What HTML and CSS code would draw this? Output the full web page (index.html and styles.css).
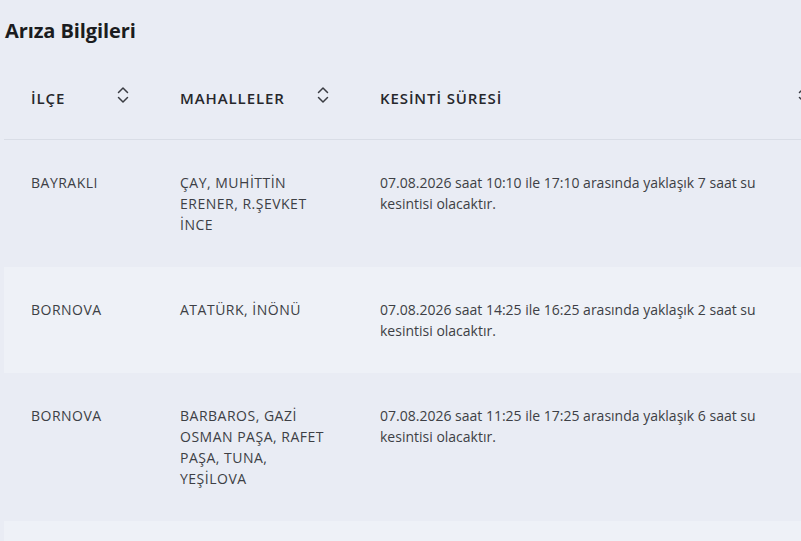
FILE: index.html
```html
<!DOCTYPE html>
<html lang="tr">
<head>
<meta charset="utf-8">
<link rel="stylesheet" href="styles.css">
</head>
<body>
<div class="page">
  <h2 class="title">Arıza Bilgileri</h2>
  <table class="grid">
    <colgroup>
      <col class="c1"><col class="c2"><col class="c3">
    </colgroup>
    <thead>
      <tr>
        <th><div class="th-in"><span>İLÇE</span><svg class="sort" viewBox="0 0 12 18" width="12" height="18"><path d="M1.5 6.5 L6 2 L10.5 6.5 M1.5 11.5 L6 16 L10.5 11.5"/></svg></div></th>
        <th><div class="th-in"><span>MAHALLELER</span><svg class="sort" viewBox="0 0 12 18" width="12" height="18"><path d="M1.5 6.5 L6 2 L10.5 6.5 M1.5 11.5 L6 16 L10.5 11.5"/></svg></div></th>
        <th><div class="th-in"><span>KESİNTİ SÜRESİ</span><svg class="sort" viewBox="0 0 12 18" width="12" height="18"><path d="M1.5 6.5 L6 2 L10.5 6.5 M1.5 11.5 L6 16 L10.5 11.5"/></svg></div></th>
      </tr>
    </thead>
    <tbody>
      <tr>
        <td class="up">BAYRAKLI</td>
        <td class="up">ÇAY, MUHİTTİN ERENER, R.ŞEVKET İNCE</td>
        <td>07.08.2026 saat 10:10 ile 17:10 arasında yaklaşık 7 saat su kesintisi olacaktır.</td>
      </tr>
      <tr class="alt">
        <td class="up">BORNOVA</td>
        <td class="up">ATATÜRK, İNÖNÜ</td>
        <td>07.08.2026 saat 14:25 ile 16:25 arasında yaklaşık 2 saat su kesintisi olacaktır.</td>
      </tr>
      <tr>
        <td class="up">BORNOVA</td>
        <td class="up">BARBAROS, GAZİ OSMAN PAŞA, RAFET PAŞA, TUNA, YEŞİLOVA</td>
        <td>07.08.2026 saat 11:25 ile 17:25 arasında yaklaşık 6 saat su kesintisi olacaktır.</td>
      </tr>
      <tr class="alt empty">
        <td></td>
        <td></td>
        <td></td>
      </tr>
    </tbody>
  </table>
</div>
</body>
</html>
```

FILE: styles.css
```css
html, body {
  margin: 0;
  padding: 0;
  background: #e9ecf4;
  overflow: hidden;
}
body {
  font-family: "Open Sans", "Noto Sans", sans-serif;
  color: #3b3d42;
  width: 801px;
  height: 541px;
}
.page {
  padding: 0 0 0 4px;
}
.title {
  margin: 0;
  padding: 18px 0 0 1px;
  height: 38px;
  font-size: 20px;
  line-height: 26px;
  font-weight: 700;
  color: #1b1c20;
  letter-spacing: -0.1px;
}
.grid {
  border-collapse: collapse;
  table-layout: fixed;
  width: 830px;
}
.c1 { width: 149px; }
.c2 { width: 200px; }
.c3 { width: 481px; }
.grid th {
  padding: 32px 24px 31px 27px;
  border-bottom: 1px solid #d9dde6;
  text-align: left;
  font-size: 15px;
  font-weight: 600;
  line-height: 20px;
  letter-spacing: 0.9px;
  color: #26272c;
}
.th-in {
  display: flex;
  justify-content: space-between;
  align-items: center;
}
.sort {
  fill: none;
  stroke: #3a3c42;
  stroke-width: 1.5;
  stroke-linecap: round;
  stroke-linejoin: round;
  margin-top: -6px;
  flex: none;
}
.grid td {
  padding: 32px 24px 32px 27px;
  vertical-align: top;
  font-size: 14px;
  line-height: 21px;
  color: #3d3f45;
}
.grid td.up {
  letter-spacing: 0.5px;
  padding-right: 26px;
}
.grid tr.alt td {
  background: #eef1f7;
}
.grid tr.empty td {
  height: 40px;
  padding: 0;
}
```
